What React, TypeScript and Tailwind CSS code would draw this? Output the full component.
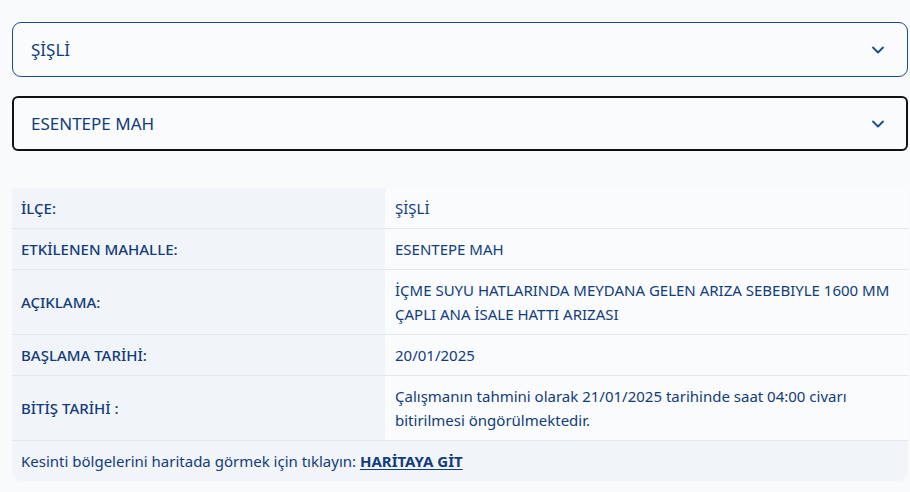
import { ChevronDown } from 'lucide-react';

interface Row {
  label: string;
  value: string;
}

const ROWS: Row[] = [
  { label: 'İLÇE:', value: 'ŞİŞLİ' },
  { label: 'ETKİLENEN MAHALLE:', value: 'ESENTEPE MAH' },
  {
    label: 'AÇIKLAMA:',
    value: 'İÇME SUYU HATLARINDA MEYDANA GELEN ARIZA SEBEBIYLE 1600 MM ÇAPLI ANA İSALE HATTI ARIZASI',
  },
  { label: 'BAŞLAMA TARİHİ:', value: '20/01/2025' },
  {
    label: 'BİTİŞ TARİHİ :',
    value: 'Çalışmanın tahmini olarak 21/01/2025 tarihinde saat 04:00 civarı bitirilmesi öngörülmektedir.',
  },
];

function Select({ value, focused }: { value: string; focused?: boolean }) {
  return (
    <div
      className={`flex items-center justify-between h-[55px] bg-[#f9fbfd] ${
        focused
          ? 'border-2 border-[#111] rounded-[6px] pl-[17px] pr-[18px]'
          : 'border border-[#1d4a8c] rounded-[9px] pl-[18px] pr-[19px]'
      }`}
    >
      <span className="text-[17px] text-[#123c7c]">{value}</span>
      <ChevronDown size={20} strokeWidth={2.2} className="text-[#1a4a8e]" />
    </div>
  );
}

export default function App() {
  return (
    <main
      className="min-h-screen bg-[#f9fafc] pl-3 pr-[2px] pt-[22px] text-[#123c7c]"
      style={{ fontFamily: '"Noto Sans", sans-serif' }}
    >
      <div className="flex flex-col gap-[19px]">
        <Select value="ŞİŞLİ" />
        <Select value="ESENTEPE MAH" focused />
      </div>

      {/* Detail table */}
      <div className="mt-[37px] rounded-b-[10px] overflow-hidden text-[15px] leading-6">
        {ROWS.map((r) => (
          <div key={r.label} className="grid grid-cols-[373px_1fr] border-b border-[#e3e7ec]">
            <div className="flex items-center bg-[#f1f4f8] px-[9px] py-2 font-medium">{r.label}</div>
            <div className="flex items-center bg-[#f9fbfd] px-[10px] py-2">{r.value}</div>
          </div>
        ))}
        <div className="bg-[#f1f4f8] px-[9px] py-2">
          Kesinti bölgelerini haritada görmek için tıklayın:{' '}
          <a href="#" className="font-bold underline underline-offset-2">
            HARİTAYA GİT
          </a>
        </div>
      </div>
    </main>
  );
}
